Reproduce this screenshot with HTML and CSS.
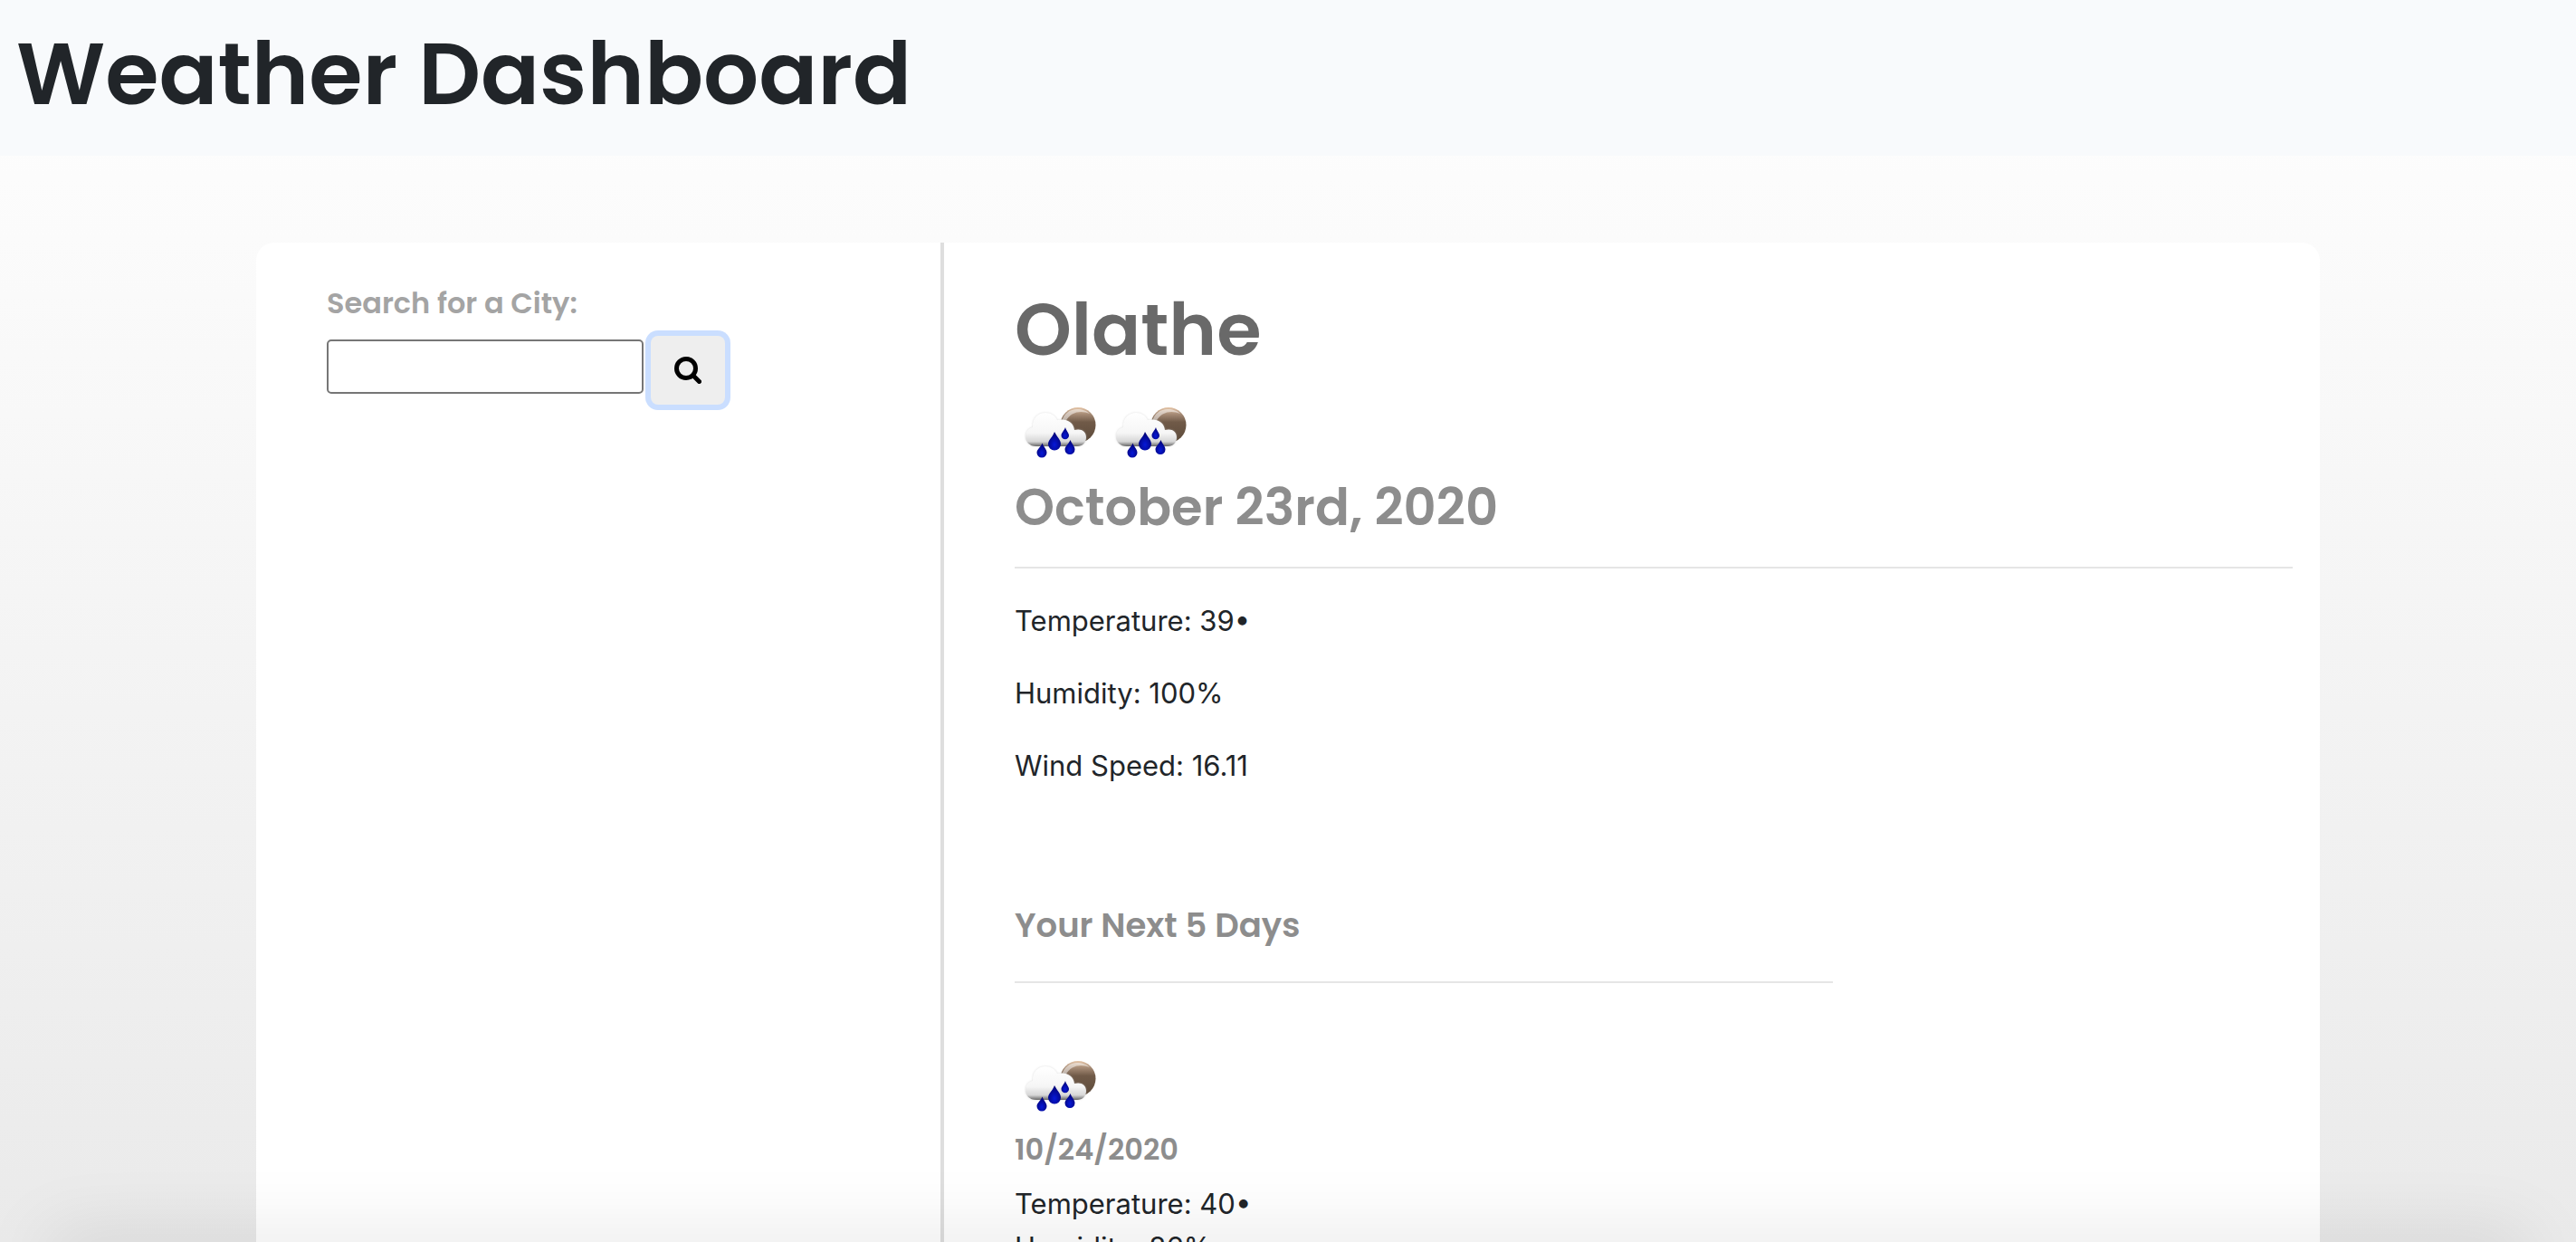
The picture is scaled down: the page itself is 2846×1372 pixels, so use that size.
FILE: index.html
```html
<!DOCTYPE html>
<html lang="en">
<head>
<meta charset="utf-8">
<meta name="viewport" content="width=device-width, initial-scale=1">
<title>Weather Dashboard</title>
<link rel="stylesheet" href="styles.css">
</head>
<body>
<svg class="sprite" aria-hidden="true">
  <defs>
    <linearGradient id="moon" x1="0" y1="0" x2="0" y2="1">
      <stop offset="0" stop-color="#e6c6a8"/>
      <stop offset=".18" stop-color="#a98e78"/>
      <stop offset=".42" stop-color="#705a48"/>
      <stop offset="1" stop-color="#5c4a3a"/>
    </linearGradient>
    <linearGradient id="cloud" gradientUnits="userSpaceOnUse" x1="0" y1="28" x2="0" y2="65">
      <stop offset="0" stop-color="#ffffff"/>
      <stop offset=".6" stop-color="#f6f6f6"/>
      <stop offset=".86" stop-color="#d6d6d6"/>
      <stop offset="1" stop-color="#666666"/>
    </linearGradient>
    <radialGradient id="drop" cx=".5" cy=".7" r=".6">
      <stop offset="0" stop-color="#0618d8"/>
      <stop offset="1" stop-color="#02047a"/>
    </radialGradient>
    <filter id="haze" x="-20%" y="-20%" width="140%" height="140%"><feGaussianBlur stdDeviation="1"/></filter>
    <symbol id="rain" viewBox="0 0 100 100">
      <circle cx="70" cy="41.500" r="19.500" fill="url(#moon)"/>
      <path d="M52 38c2-9 9-14 17-14 6 0 11 2 14 5-9-4-21-3-27 9z" fill="#fff" opacity=".5"/>
      <path d="M24 65c-8 0-12-5-12-11 0-5 3-9 8-10-1-10 6-16 14-16 6 0 11 3 13 8 10-2 18 2 19 11 7-2 13 1 13 8 0 6-4 10-10 10z" fill="#bbb" opacity=".5" filter="url(#haze)"/>
      <path d="M24 65c-8 0-12-5-12-11 0-5 3-9 8-10-1-10 6-16 14-16 6 0 11 3 13 8 10-2 18 2 19 11 7-2 13 1 13 8 0 6-4 10-10 10z" fill="url(#cloud)"/>
      <path d="M44 49c3 6 7 9 7 13.500a7 7 0 0 1-14 0c0-4.500 5-7.500 7-13.500z" fill="url(#drop)"/>
      <path d="M56 44c1 4 4 6 4 9a4.250 4.250 0 0 1-8.500 0c0-3 3-5 4.500-9z" fill="url(#drop)"/>
      <path d="M61.500 58c2 5 5 7 5 10.500a5.500 5.500 0 0 1-11 0c0-3.500 4-5.500 6-10.500z" fill="url(#drop)"/>
      <path d="M30.500 61.500c2 5 5 7 5 10.500a5.500 5.500 0 0 1-11 0c0-3.500 4-5.500 6-10.500z" fill="url(#drop)"/>
    </symbol>
  </defs>
</svg>
<header class="site-header">
  <h1 class="site-title">Weather Dashboard</h1>
</header>
<main class="dashboard">
  <aside class="search-panel">
    <form class="search">
      <label class="search-label" for="city">Search for a City:</label>
      <div class="search-row">
        <input class="search-input" id="city" type="text">
        <button class="search-button" type="button" aria-label="Search">
          <svg class="search-icon" viewBox="0 0 30 30" aria-hidden="true"><circle cx="13" cy="13" r="10.500"/><path d="M20.500 20.500L27.500 27.500"/></svg>
        </button>
      </div>
    </form>
  </aside>
  <section class="weather">
    <h2 class="city">Olathe</h2>
    <div class="icons">
      <svg class="weather-icon" role="img" aria-label="Rain"><use href="#rain"/></svg>
      <svg class="weather-icon" role="img" aria-label="Rain"><use href="#rain"/></svg>
    </div>
    <h3 class="today">October 23rd, 2020</h3>
    <hr class="rule">
    <div class="conditions">
      <p class="reading">Temperature: 39•</p>
      <p class="reading">Humidity: 100%</p>
      <p class="reading">Wind Speed: 16.11</p>
    </div>
    <section class="forecast">
      <h4 class="forecast-title">Your Next 5 Days</h4>
      <hr class="rule">
      <article class="day">
        <svg class="weather-icon" role="img" aria-label="Rain"><use href="#rain"/></svg>
        <h5 class="day-date">10/24/2020</h5>
        <p class="reading">Temperature: 40•</p>
        <p class="reading">Humidity: 86%</p>
      </article>
    </section>
  </section>
</main>
<div class="bottom-shade"></div>
</body>
</html>
```
FILE: styles.css
```css
* { box-sizing: border-box; }

body {
  margin: 0;
  height: 100vh;
  overflow: hidden;
  display: flex;
  flex-direction: column;
  background: linear-gradient(#ffffff, #eaeaea);
  color: #212529;
  font: 31px/48px Inter, "Liberation Sans", sans-serif;
}

h1, h2, h3, h4, h5, p { margin: 0; }

h1, h2, h3, h4, h5, label {
  font-family: Poppins, Inter, sans-serif;
  font-weight: 600;
}

.sprite { position: absolute; width: 0; height: 0; }

.site-header {
  flex: none;
  padding: 24px 18px 32px;
  background: #f8fafc;
}

.site-title { font-size: 96px; line-height: 116px; }

.dashboard {
  flex: 1;
  min-height: 0;
  width: 100%;
  max-width: 2280px;
  margin: 96px auto 0;
  display: grid;
  grid-template-columns: 1fr 2fr;
  background: #ffffff;
  border-radius: 20px 20px 0 0;
}

.search-panel {
  padding: 43px 30px 0 78px;
  border-right: 4px solid #dedede;
}

.search-label { display: block; color: #a4a4a4; font-size: 32px; }

.search-row {
  display: flex;
  align-items: flex-start;
  gap: 8px;
  padding-top: 12px;
}

.search-input {
  width: 350px;
  height: 60px;
  margin-top: 4px;
  padding: 2px 4px;
  border: 2px solid #767676;
  border-radius: 5px;
  background: #ffffff;
  font: inherit;
}

.search-button {
  width: 82px;
  height: 76px;
  padding: 0;
  display: flex;
  align-items: center;
  justify-content: center;
  border: 0;
  border-radius: 8px;
  background: #eeeeee;
  box-shadow: 0 0 0 6px #cadeff;
}

.search-icon {
  width: 30px;
  height: 30px;
  fill: none;
  stroke: #000000;
  stroke-width: 5;
  stroke-linecap: round;
}

.weather { padding: 48px 30px 0 78px; }

.city { color: #696969; font-size: 80px; line-height: 96px; }
.icons { display: flex; margin-top: 16px; }
.weather-icon { display: block; width: 100px; height: 100px; }
.today { color: #8d8d8d; font-size: 56px; line-height: 66px; }

.rule {
  height: 2px;
  margin: 32px 0 34px;
  border: 0;
  background: #e5e5e5;
}

.conditions { display: grid; gap: 32px; }

.forecast { width: 64%; margin-top: 128px; }
.forecast-title { padding-bottom: 6px; color: #8d8d8d; font-size: 37px; line-height: 48px; }
.day { padding-top: 30px; }
.day-date { margin-bottom: 16px; color: #8d8d8d; font-size: 32px; line-height: 40px; }

.bottom-shade {
  position: fixed;
  left: 60px;
  right: 60px;
  bottom: -40px;
  height: 40px;
  box-shadow: 0 0 80px 8px rgba(0, 0, 0, .1);
  pointer-events: none;
}
```
